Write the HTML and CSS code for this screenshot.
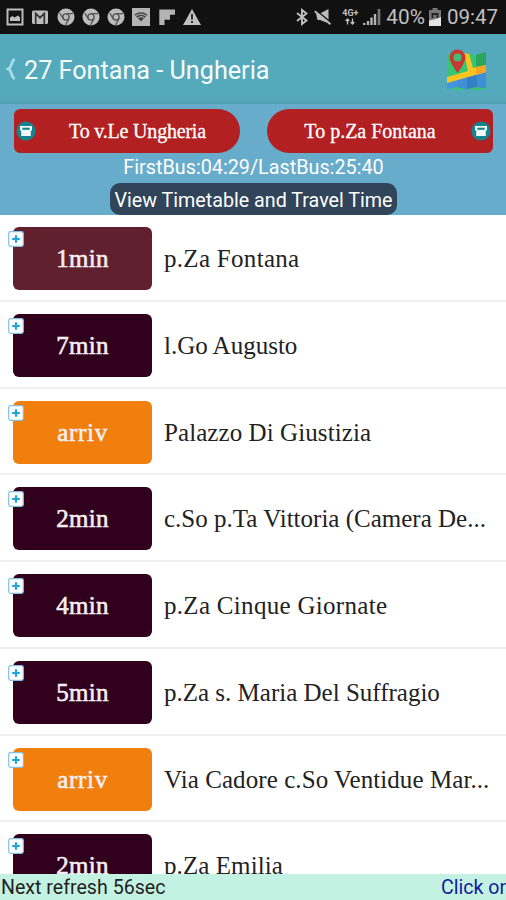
FILE: index.html
```html
<!DOCTYPE html>
<html lang="en">
<head>
    <meta charset="UTF-8">
    <meta name="viewport" content="width=device-width, initial-scale=1.0">
    <title>27 Fontana - Ungheria</title>
    <link rel="stylesheet" href="styles.css">
</head>
<body>

    <!-- Shared icons -->
    <svg class="symbols" width="0" height="0">
        <symbol id="chrome" viewBox="0 0 18 18">
            <circle cx="9" cy="9" r="8.5" fill="#bcbcbc"/>
            <circle cx="9" cy="9" r="3.1" fill="none" stroke="#555" stroke-width="1.4"/>
            <path d="M9 5.7h7M6.2 10.6L2.7 5M11.9 10.6L8.6 17" stroke="#555" stroke-width="1.3" fill="none"/>
        </symbol>
        <symbol id="bus" viewBox="0 0 20 20">
            <circle cx="10" cy="10" r="9.6" fill="#14838d"/>
            <path d="M4 5h12v4.500h-1.200V15H5.200V9.500H4z" fill="#f2f7f8"/>
            <path d="M6.300 6.700h7.400v2.100H6.300z" fill="#14838d"/>
        </symbol>
        <symbol id="plus" viewBox="0 0 16 16">
            <rect x=".7" y=".7" width="14.6" height="14.6" rx="1.8" fill="#fff" stroke="#85bfe2" stroke-width="1.2"/>
            <path d="M8 4.2v7.6M4.2 8h7.6" stroke="#1ba4e4" stroke-width="2.2"/>
        </symbol>
    </svg>

    <div class="status-bar">
        <div class="status-left">
            <svg width="18" height="18" viewBox="0 0 18 18"><path d="M1.5 1.5h15v15h-15z" fill="none" stroke="#bcbcbc" stroke-width="2"/><path d="M4 13V9.5L6.5 8l2 1.5L12 7.5l2 2V13z" fill="#bcbcbc"/></svg>
            <svg width="18" height="18" viewBox="0 0 18 18"><rect x="1" y="2.5" width="16" height="13.5" rx="1.5" fill="#bcbcbc"/><path d="M4.7 16V5.5L9 9.7l4.3-4.2V16" fill="none" stroke="#333" stroke-width="1.7"/></svg>
            <svg width="18" height="18"><use href="#chrome"/></svg>
            <svg width="18" height="18"><use href="#chrome"/></svg>
            <svg width="18" height="18"><use href="#chrome"/></svg>
            <svg width="18" height="18" viewBox="0 0 18 18"><path d="M0 0h18v18H0z" fill="#b4b4b4"/><path d="M2.5 6.5Q9 2 15.5 6.5L9 13.5z" fill="#444"/><path d="M4 7.5Q9 4.500 14 7.500M6 9.500Q9 7.500 12 9.500" fill="none" stroke="#b4b4b4"/></svg>
            <svg width="18" height="18" viewBox="0 0 18 18"><path d="M1.3 1.5H17v5.2H12v5H6.5V17H1.3z" fill="#b4b4b4"/></svg>
            <svg width="18" height="18" viewBox="0 0 18 18"><path d="M9 1L18 17H0z" fill="#c0c0c0"/><path d="M9 6v5.5M9 13v2" stroke="#222" stroke-width="1.8"/></svg>
        </div>
        <div class="status-right">
            <svg width="12" height="18" viewBox="0 0 12 18"><path d="M1 5l9.5 7.5L6 16V2l4.500 3.500L1 13" fill="none" stroke="#c0c0c0" stroke-width="1.9"/></svg>
            <svg class="mute" width="18" height="18" viewBox="0 0 18 18"><path d="M2 5.500h4l8.500-4.500v14L11 14 6 12H3.500z" fill="#bcbcbc"/><path d="M1 1.500l15.500 12.500" stroke="#111" stroke-width="1.600"/><path d="M.8 3.300l15.700 13" stroke="#bcbcbc" stroke-width="2"/></svg>
            <div class="network">
                <span>4G+</span>
                <svg width="10" height="7" viewBox="0 0 10 7"><path d="M2.5 6.5V1M.7 3l1.800-2 1.800 2M7.500.5V6M5.700 4l1.800 2 1.800-2" fill="none" stroke="#c0c0c0" stroke-width="1.3"/></svg>
            </div>
            <svg class="signal" width="18" height="18" viewBox="0 0 18 18"><path d="M1.200 15v2M5 13v4M8.500 9.500V17M12 6v11" stroke="#b4b4b4" stroke-width="2.4"/><path d="M16 1v16" stroke="#777" stroke-width="2.7"/></svg>
            <span class="percent">40%</span>
            <svg class="battery" width="12" height="18" viewBox="0 0 12 18"><path d="M3.500 0h5v2H12v16H0V2h3.500z" fill="#777"/><path d="M0 12.500L7 11l5-2v9H0z" fill="#e4e4e4"/><path d="M3.500 10V6h5v4" fill="none" stroke="#222" stroke-width="1.8"/></svg>
            <span class="clock">09:47</span>
        </div>
    </div>

    <header>
        <svg class="back" width="10" height="22" viewBox="0 0 10 22"><path d="M8.500 1Q6.200 3 5 7.500 4.400 10 2.200 11 4.400 12 5 14.500 6.200 19 8.500 21" fill="none" stroke="#a9dcea" stroke-width="2.8"/></svg>
        <h1>27 Fontana - Ungheria</h1>
        <svg class="map" width="40" height="42" viewBox="0 0 40 42">
            <path d="M0 6l10-3 10 2 9 1 10-3v37l-9 1-10-1-10 1-10-2z" fill="#36c673"/>
            <path d="M29 6l10-3v17l-10 3z" fill="#2aa55e"/>
            <path d="M0 31l20-6v15l-10-2-10 2z" fill="#4294dc"/>
            <path d="M20 25l19-7v21l-9-1-10 2z" fill="#3281c5"/>
            <path d="M10 29l10-3v14l-10-2zM30 23l9-4v20l-9-1z" fill="#3f8fd8"/>
            <path d="M17 4l5 1 4 14 13-3v7L0 34v-6l21-6z" fill="#f9c41e"/>
            <path d="M29 18l10-2v7l-10 3z" fill="#f5a623"/>
            <path d="M10.500 24Q2.500 13 2.500 8.500a8 8 0 0 1 16 0Q18.500 13 10.500 24z" fill="#c93732"/>
            <circle cx="10.500" cy="8.500" r="4" fill="#42be79"/>
        </svg>
    </header>

    <section class="line-info">
        <div class="directions">
            <button class="direction direction-out">
                <svg width="20" height="20"><use href="#bus"/></svg>
                <span>To v.Le Ungheria</span>
            </button>
            <button class="direction direction-back">
                <span>To p.Za Fontana</span>
                <svg width="20" height="20"><use href="#bus"/></svg>
            </button>
        </div>
        <p class="hours">FirstBus:04:29/LastBus:25:40</p>
        <button class="timetable">View Timetable and Travel Time</button>
    </section>

    <main>
        <ul class="stops">
            <li>
                <div class="wait soon">1min<svg class="plus"><use href="#plus"/></svg></div>
                <span class="stop-name wide">p.Za Fontana</span>
            </li>
            <li>
                <div class="wait">7min<svg class="plus"><use href="#plus"/></svg></div>
                <span class="stop-name narrow">l.Go Augusto</span>
            </li>
            <li>
                <div class="wait arriving">arriv<svg class="plus"><use href="#plus"/></svg></div>
                <span class="stop-name">Palazzo Di Giustizia</span>
            </li>
            <li>
                <div class="wait">2min<svg class="plus"><use href="#plus"/></svg></div>
                <span class="stop-name narrow">c.So p.Ta Vittoria (Camera De...</span>
            </li>
            <li>
                <div class="wait">4min<svg class="plus"><use href="#plus"/></svg></div>
                <span class="stop-name wide">p.Za Cinque Giornate</span>
            </li>
            <li>
                <div class="wait">5min<svg class="plus"><use href="#plus"/></svg></div>
                <span class="stop-name narrow">p.Za s. Maria Del Suffragio</span>
            </li>
            <li>
                <div class="wait arriving">arriv<svg class="plus"><use href="#plus"/></svg></div>
                <span class="stop-name">Via Cadore c.So Ventidue Mar...</span>
            </li>
            <li>
                <div class="wait">2min<svg class="plus"><use href="#plus"/></svg></div>
                <span class="stop-name">p.Za Emilia</span>
            </li>
        </ul>
    </main>

    <footer>
        <span>Next refresh 56sec</span>
        <span class="ticker">Click on</span>
    </footer>

</body>
</html>
```
FILE: styles.css
```css
/* General Body Styling */
* {
    box-sizing: border-box;
}

body {
    font-family: Roboto, sans-serif;
    background-color: #fff;
    margin: 0;
    height: 900px;
    display: flex;
    flex-direction: column;
    overflow: hidden;
}

svg {
    display: block;
    flex: none;
}

.symbols {
    display: none;
}

button {
    border: none;
    padding: 0;
    cursor: pointer;
}

/* Status Bar */
.status-bar {
    flex: none;
    display: flex;
    justify-content: space-between;
    height: 34px;
    padding: 0 8px 0 6px;
    background-color: #111;
    color: #c0c0c0;
}

.status-left, .status-right {
    display: flex;
    align-items: center;
}

.status-left {
    gap: 7.3px;
}

.mute {
    margin-left: 6px;
}

.network {
    display: flex;
    flex-direction: column;
    align-items: center;
    width: 18px;
    margin-left: 9px;
    font-size: 9px;
    line-height: 9px;
    font-weight: bold;
}

.signal {
    margin-left: 4px;
}

.percent {
    margin-left: 5px;
    font-size: 20.8px;
}

.battery {
    margin: 0 6px 0 4px;
}

.clock {
    font-size: 20.5px;
}

/* Title Bar */
header {
    flex: none;
    display: flex;
    align-items: center;
    height: 70px;
    padding: 2px 19px 0 6px;
    background: linear-gradient(#54aaba 66px, #4c9fb2 70px);
    color: #f5fbfc;
}

.back {
    margin-top: -3px;
}

h1 {
    flex: 1;
    margin: 0 0 0 8px;
    font-size: 25.2px;
    font-weight: normal;
}

/* Directions and Timetable */
.line-info {
    flex: none;
    display: flex;
    flex-direction: column;
    align-items: center;
    height: 111px;
    padding: 5px 13px 0 14px;
    background-color: #67accb;
    color: #fff;
}

.directions {
    display: flex;
    justify-content: space-between;
    align-self: stretch;
}

.direction {
    display: flex;
    align-items: center;
    width: 226px;
    height: 44px;
    padding: 0 2px;
    background-color: #b22022;
    color: #fff;
    font-family: "Liberation Serif", serif;
    font-size: 20px;
    -webkit-text-stroke: 0.3px #fff;
}

.direction span {
    flex: 1;
    text-align: center;
}

.direction-out {
    border-radius: 6px 22px 22px 6px;
    letter-spacing: -0.2px;
}

.direction-out span {
    padding-left: 1px;
}

.direction-back {
    border-radius: 22px 6px 6px 22px;
}

.hours {
    margin: 0;
    font-size: 19.8px;
    line-height: 30px;
}

.timetable {
    width: 287px;
    height: 32px;
    padding-top: 3px;
    border-radius: 10px;
    background-color: #30445a;
    color: #fff;
    font-family: Roboto, sans-serif;
    font-size: 19.7px;
    white-space: nowrap;
}

/* Stop List */
main {
    flex: 1;
    min-height: 0;
    overflow: hidden;
}

.stops {
    list-style-type: none;
    margin: 0;
    padding: 0;
}

.stops li {
    display: flex;
    height: 86.75px;
    padding: 12px 0 0 13px;
    border-bottom: 2px solid #f0f0f0;
}

.wait {
    position: relative;
    flex: none;
    width: 139px;
    height: 63px;
    border-radius: 6px;
    background-color: #30001d;
    color: #f5eef1;
    font-family: "Liberation Serif", serif;
    font-size: 25px;
    letter-spacing: 0.3px;
    line-height: 64px;
    text-align: center;
    -webkit-text-stroke: 0.6px #f5eef1;
}

.soon {
    background-color: #61202d;
}

.arriving {
    background-color: #f07f0e;
    letter-spacing: 0.7px;
}

.plus {
    position: absolute;
    left: -5px;
    top: 4px;
    width: 16px;
    height: 16px;
}

.stop-name {
    margin-left: 12px;
    color: #222;
    font-family: "Liberation Serif", serif;
    font-size: 25px;
    letter-spacing: 0.08px;
    line-height: 63px;
    white-space: nowrap;
}

.wide {
    letter-spacing: 0.3px;
}

.narrow {
    letter-spacing: 0;
}

/* Refresh Bar */
footer {
    flex: none;
    display: flex;
    justify-content: space-between;
    height: 26px;
    padding-left: 1px;
    background-color: #c4f2e2;
    color: #222;
    font-size: 19.6px;
    line-height: 28px;
    overflow: hidden;
}

.ticker {
    width: 65px;
    color: #10209c;
    white-space: nowrap;
    overflow: hidden;
}
```
